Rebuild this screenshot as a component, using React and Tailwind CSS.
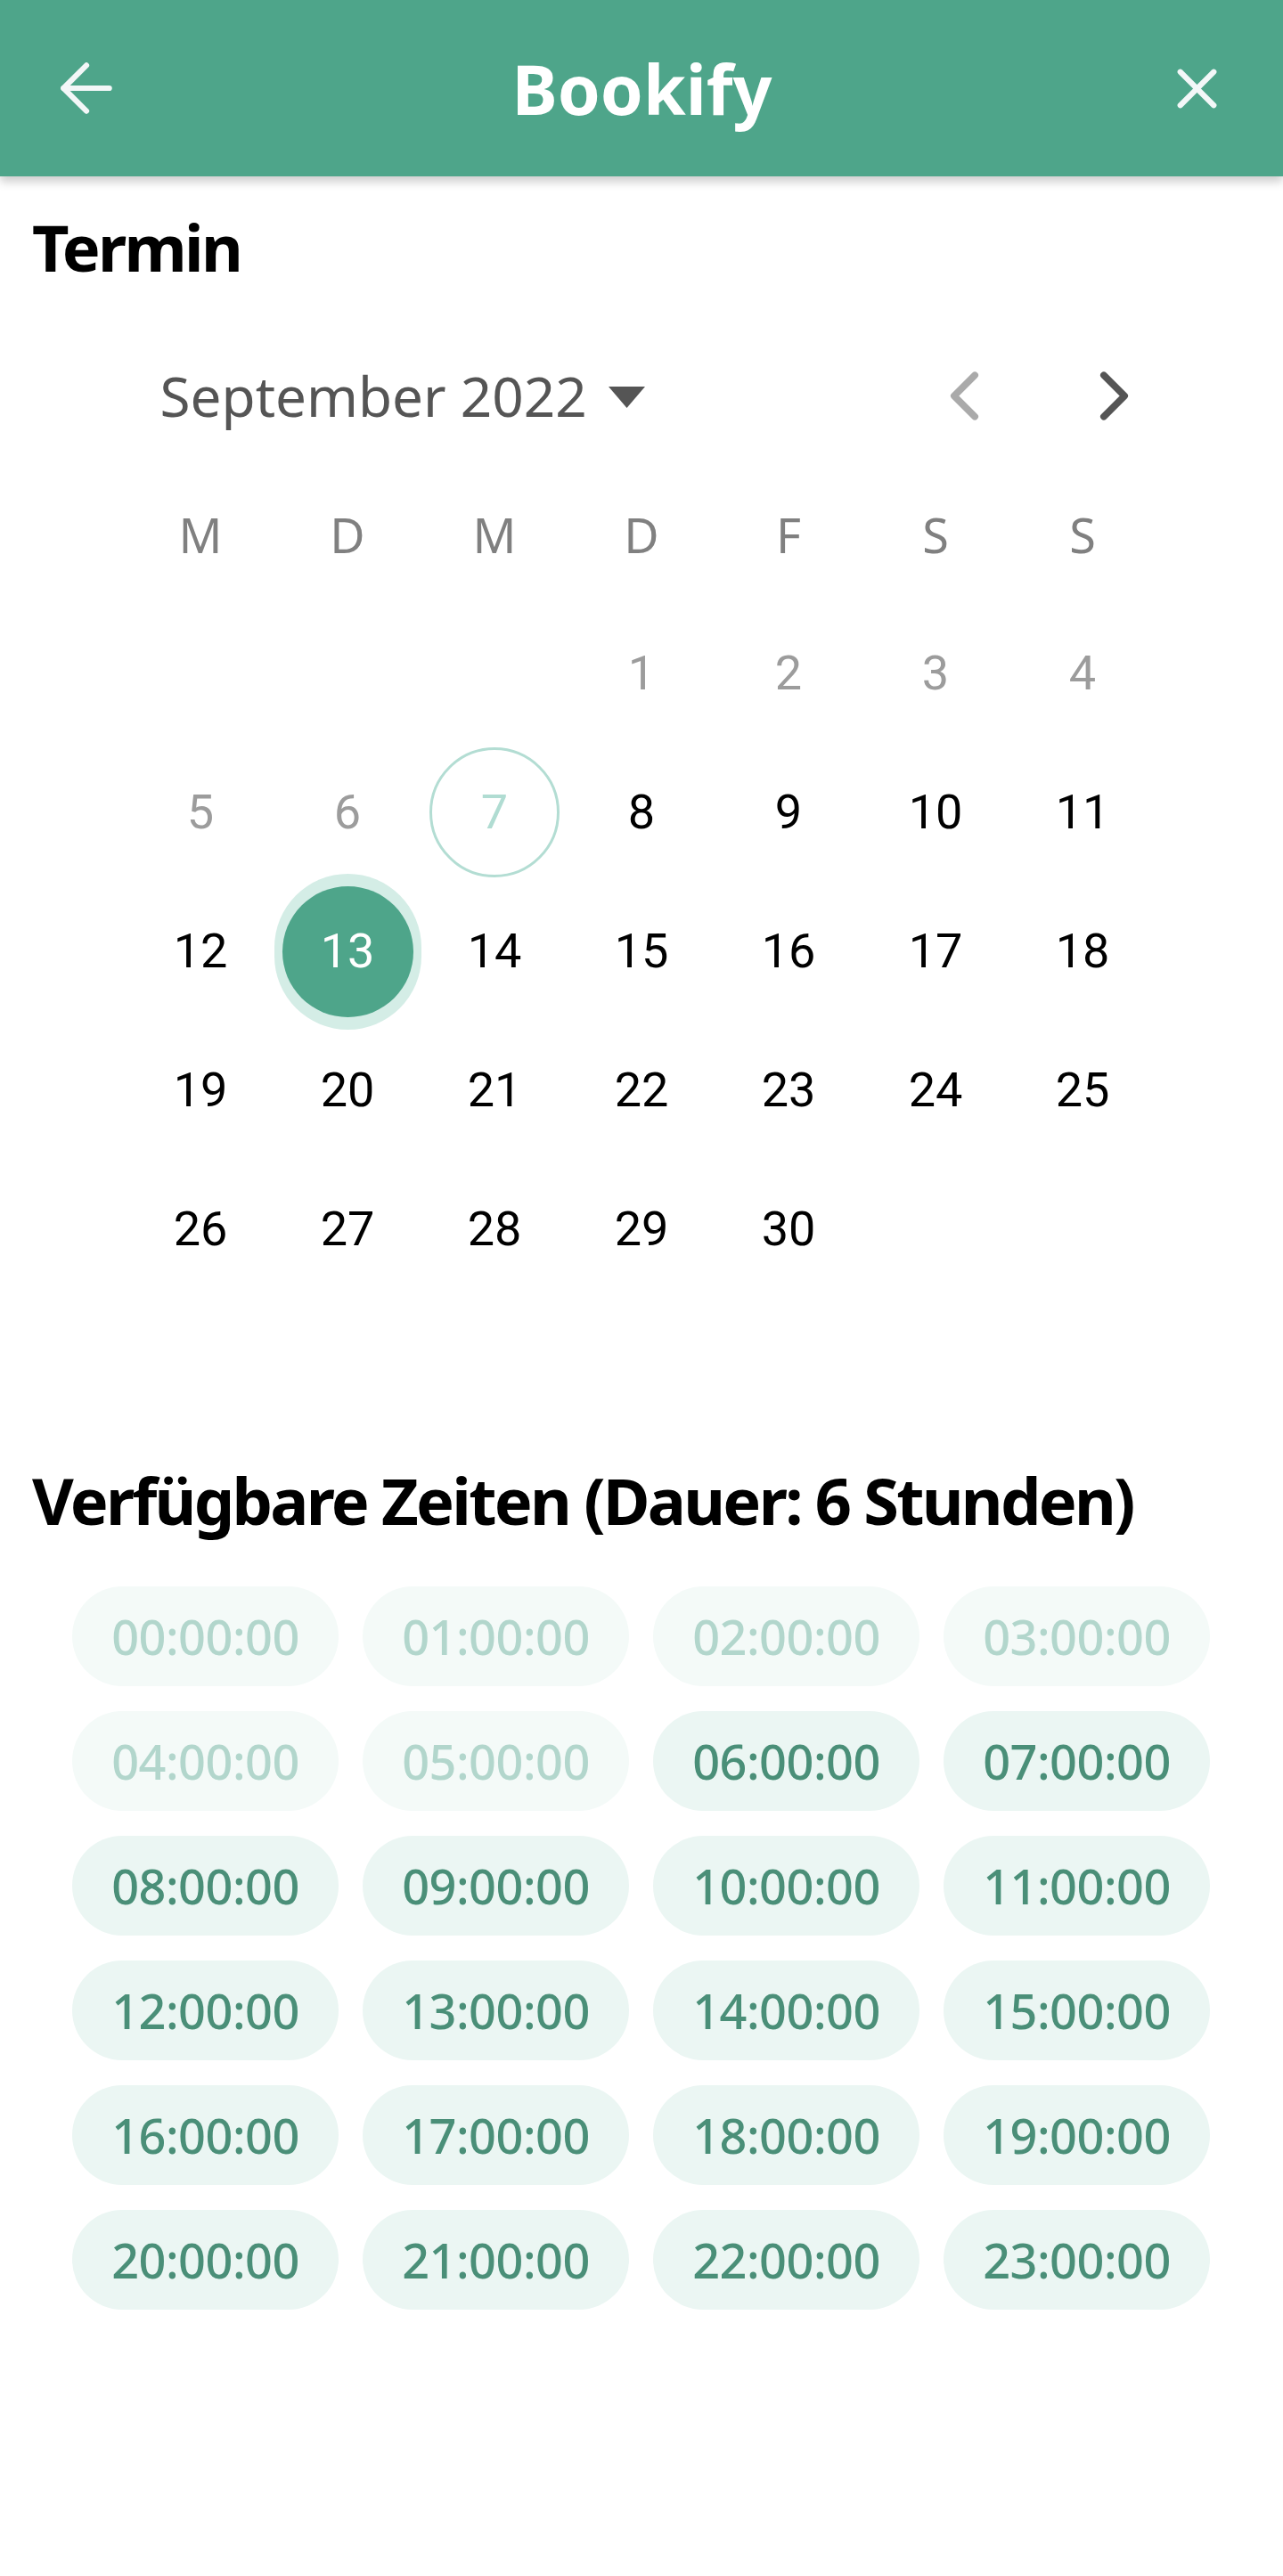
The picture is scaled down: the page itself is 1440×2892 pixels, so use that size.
import React from 'react';
import { ArrowLeft, X, ChevronLeft, ChevronRight } from 'lucide-react';

const WEEKDAYS = ['M', 'D', 'M', 'D', 'F', 'S', 'S'];

const Header = () => (
    <header className="relative z-10 h-[198px] bg-[#4ea58a] flex items-center justify-between pl-[47px] pr-[46px] shadow-[0_6px_10px_rgba(0,0,0,0.2)]">
        <button className="w-[100px] flex items-center justify-center text-[#f3f7f8]">
            <ArrowLeft size={88} strokeWidth={1.7} />
        </button>
        <h1 className="text-[77px] leading-none font-bold text-white font-['Noto_Sans',sans-serif]">Bookify</h1>
        <button className="w-[100px] flex items-center justify-center text-[#f3f7f8]">
            <X size={75} strokeWidth={2} />
        </button>
    </header>
);

const DayCell = ({ day }) => {
    if (!day) return <div className="h-[156px]" />;

    let inner;
    if (day === 13) {
        inner = (
            <span className="w-[175px] h-[175px] rounded-full bg-[#d4ede6] flex items-center justify-center">
                <span className="w-[147px] h-[147px] rounded-full bg-[#4ea58a] text-white flex items-center justify-center">{day}</span>
            </span>
        );
    } else if (day === 7) {
        inner = (
            <span className="w-[146px] h-[146px] rounded-full border-[3px] border-[#b3ddd3] text-[#b0dcd2] flex items-center justify-center">{day}</span>
        );
    } else {
        inner = <span className={day < 7 ? 'text-[#9c9c9c]' : 'text-black'}>{day}</span>;
    }

    return <div className="h-[156px] flex items-center justify-center">{inner}</div>;
};

const Calendar = () => {
    const cells = [null, null, null];
    for (let d = 1; d <= 30; d++) cells.push(d);

    return (
        <div className="mx-auto w-[1155px] mt-[53px]">
            <div className="h-[156px] flex items-center justify-between pl-[37px] pr-[1px]">
                <div className="flex items-center gap-[24px] text-[#555555] font-['Noto_Sans',sans-serif] text-[62px] leading-none">
                    <span>September 2022</span>
                    <svg width="41" height="24" viewBox="0 0 41 24" className="mt-[4px]">
                        <path d="M0 0 H41 L20.5 24 Z" fill="#555555" />
                    </svg>
                </div>
                <div className="flex items-center gap-[75px]">
                    <ChevronLeft size={93} strokeWidth={2} className="text-[#aaaaaa]" />
                    <ChevronRight size={93} strokeWidth={2} className="text-[#555555]" />
                </div>
            </div>
            <div className="grid grid-cols-7 font-['Noto_Sans',sans-serif] text-[54px] text-[#808080]">
                {WEEKDAYS.map((w, i) => (
                    <div key={i} className="h-[156px] flex items-center justify-center">{w}</div>
                ))}
            </div>
            <div className="grid grid-cols-7 font-['Roboto',sans-serif] text-[54px] leading-none">
                {cells.map((d, i) => (
                    <DayCell key={i} day={d} />
                ))}
            </div>
        </div>
    );
};

const TimeSlots = () => {
    const slots = Array.from({ length: 24 }, (_, h) => `${String(h).padStart(2, '0')}:00:00`);
    return (
        <div className="grid grid-cols-[repeat(4,299px)] gap-x-[27px] gap-y-[28px] pl-[81px] mt-[61px]">
            {slots.map((s, i) => {
                const disabled = i < 6;
                return (
                    <button
                        key={s}
                        className={
                            disabled
                                ? 'h-[112px] rounded-full bg-[#f4faf8] text-[#b2d6cc] text-[54px] font-medium tracking-[-0.5px] font-["Noto_Sans",sans-serif] flex items-center justify-center'
                                : 'h-[112px] rounded-full bg-[#ebf6f3] text-[#4a8f78] text-[54px] font-medium tracking-[-0.5px] font-["Noto_Sans",sans-serif] flex items-center justify-center'
                        }
                    >
                        {s}
                    </button>
                );
            })}
        </div>
    );
};

export default function App() {
    return (
        <div className="w-[1440px] min-h-[2892px] bg-white font-['Noto_Sans',sans-serif]">
            <Header />
            <main>
                <h2 className="pl-[36px] pt-[43px] text-[72px] leading-none font-bold tracking-[-2.7px] text-black">Termin</h2>
                <Calendar />
                <h2 className="pl-[36px] mt-[190px] text-[72px] leading-none font-bold tracking-[-2.7px] text-black">Verfügbare Zeiten (Dauer: 6 Stunden)</h2>
                <TimeSlots />
            </main>
        </div>
    );
}
